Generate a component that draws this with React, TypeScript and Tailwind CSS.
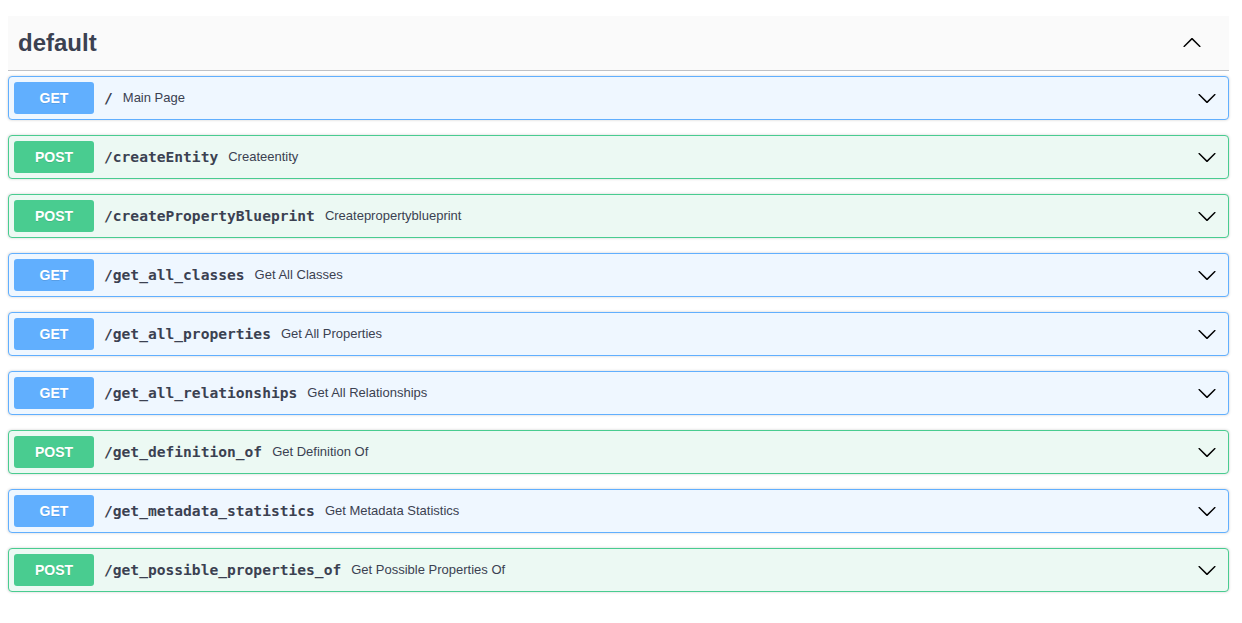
const ops = [
  { method: "GET", path: "/", summary: "Main Page" },
  { method: "POST", path: "/createEntity", summary: "Createentity" },
  { method: "POST", path: "/createPropertyBlueprint", summary: "Createpropertyblueprint" },
  { method: "GET", path: "/get_all_classes", summary: "Get All Classes" },
  { method: "GET", path: "/get_all_properties", summary: "Get All Properties" },
  { method: "GET", path: "/get_all_relationships", summary: "Get All Relationships" },
  { method: "POST", path: "/get_definition_of", summary: "Get Definition Of" },
  { method: "GET", path: "/get_metadata_statistics", summary: "Get Metadata Statistics" },
  { method: "POST", path: "/get_possible_properties_of", summary: "Get Possible Properties Of" },
];

function Arrow({ up = false }: { up?: boolean }) {
  return (
    <svg width="20" height="20" viewBox="0 0 20 20" className={up ? "rotate-180" : ""}>
      <path
        fill="#000"
        d="M17.418 6.109c.272-.268.709-.268.979 0s.271.701 0 .969l-7.908 7.83c-.27.268-.707.268-.979 0l-7.908-7.83c-.27-.268-.27-.701 0-.969.271-.268.709-.268.979 0L10 13.25l7.418-7.141z"
      />
    </svg>
  );
}

export default function App() {
  return (
    <div className="min-h-screen bg-white pt-4 pl-2 pr-[13px] font-['Liberation_Sans',Arial,sans-serif] text-[#3b4151]">
      {/* Tag header */}
      <div className="flex h-[55px] items-center justify-between border-b border-[#3b41514d] bg-[#fafafa] pl-[10px] pr-[27px]">
        <h3 className="text-[24px] font-bold leading-none">default</h3>
        <Arrow up />
      </div>

      <div className="mt-[5px] flex flex-col gap-[15px]">
        {ops.map((op) => {
          const get = op.method === "GET";
          return (
            <div
              key={op.path}
              className={`flex h-[44px] items-center rounded-[4px] border p-[5px] pr-[11px] shadow-[0_0_3px_rgba(0,0,0,0.19)] ${
                get ? "border-[#61affe] bg-[#eff7ff]" : "border-[#49cc90] bg-[#ecf9f3]"
              }`}
            >
              <span
                className={`flex h-[32px] w-[80px] shrink-0 items-center justify-center rounded-[3px] text-[14px] font-bold text-white [text-shadow:0_1px_0_rgba(0,0,0,0.1)] ${
                  get ? "bg-[#61affe]" : "bg-[#49cc90]"
                }`}
              >
                {op.method}
              </span>
              <span className="px-[10px] font-['DejaVu_Sans_Mono',monospace] text-[14.6px] font-bold text-[#3b4151]">
                {op.path}
              </span>
              <span className="flex-1 text-[13px] text-[#3b4151]">{op.summary}</span>
              <Arrow />
            </div>
          );
        })}
      </div>
    </div>
  );
}
